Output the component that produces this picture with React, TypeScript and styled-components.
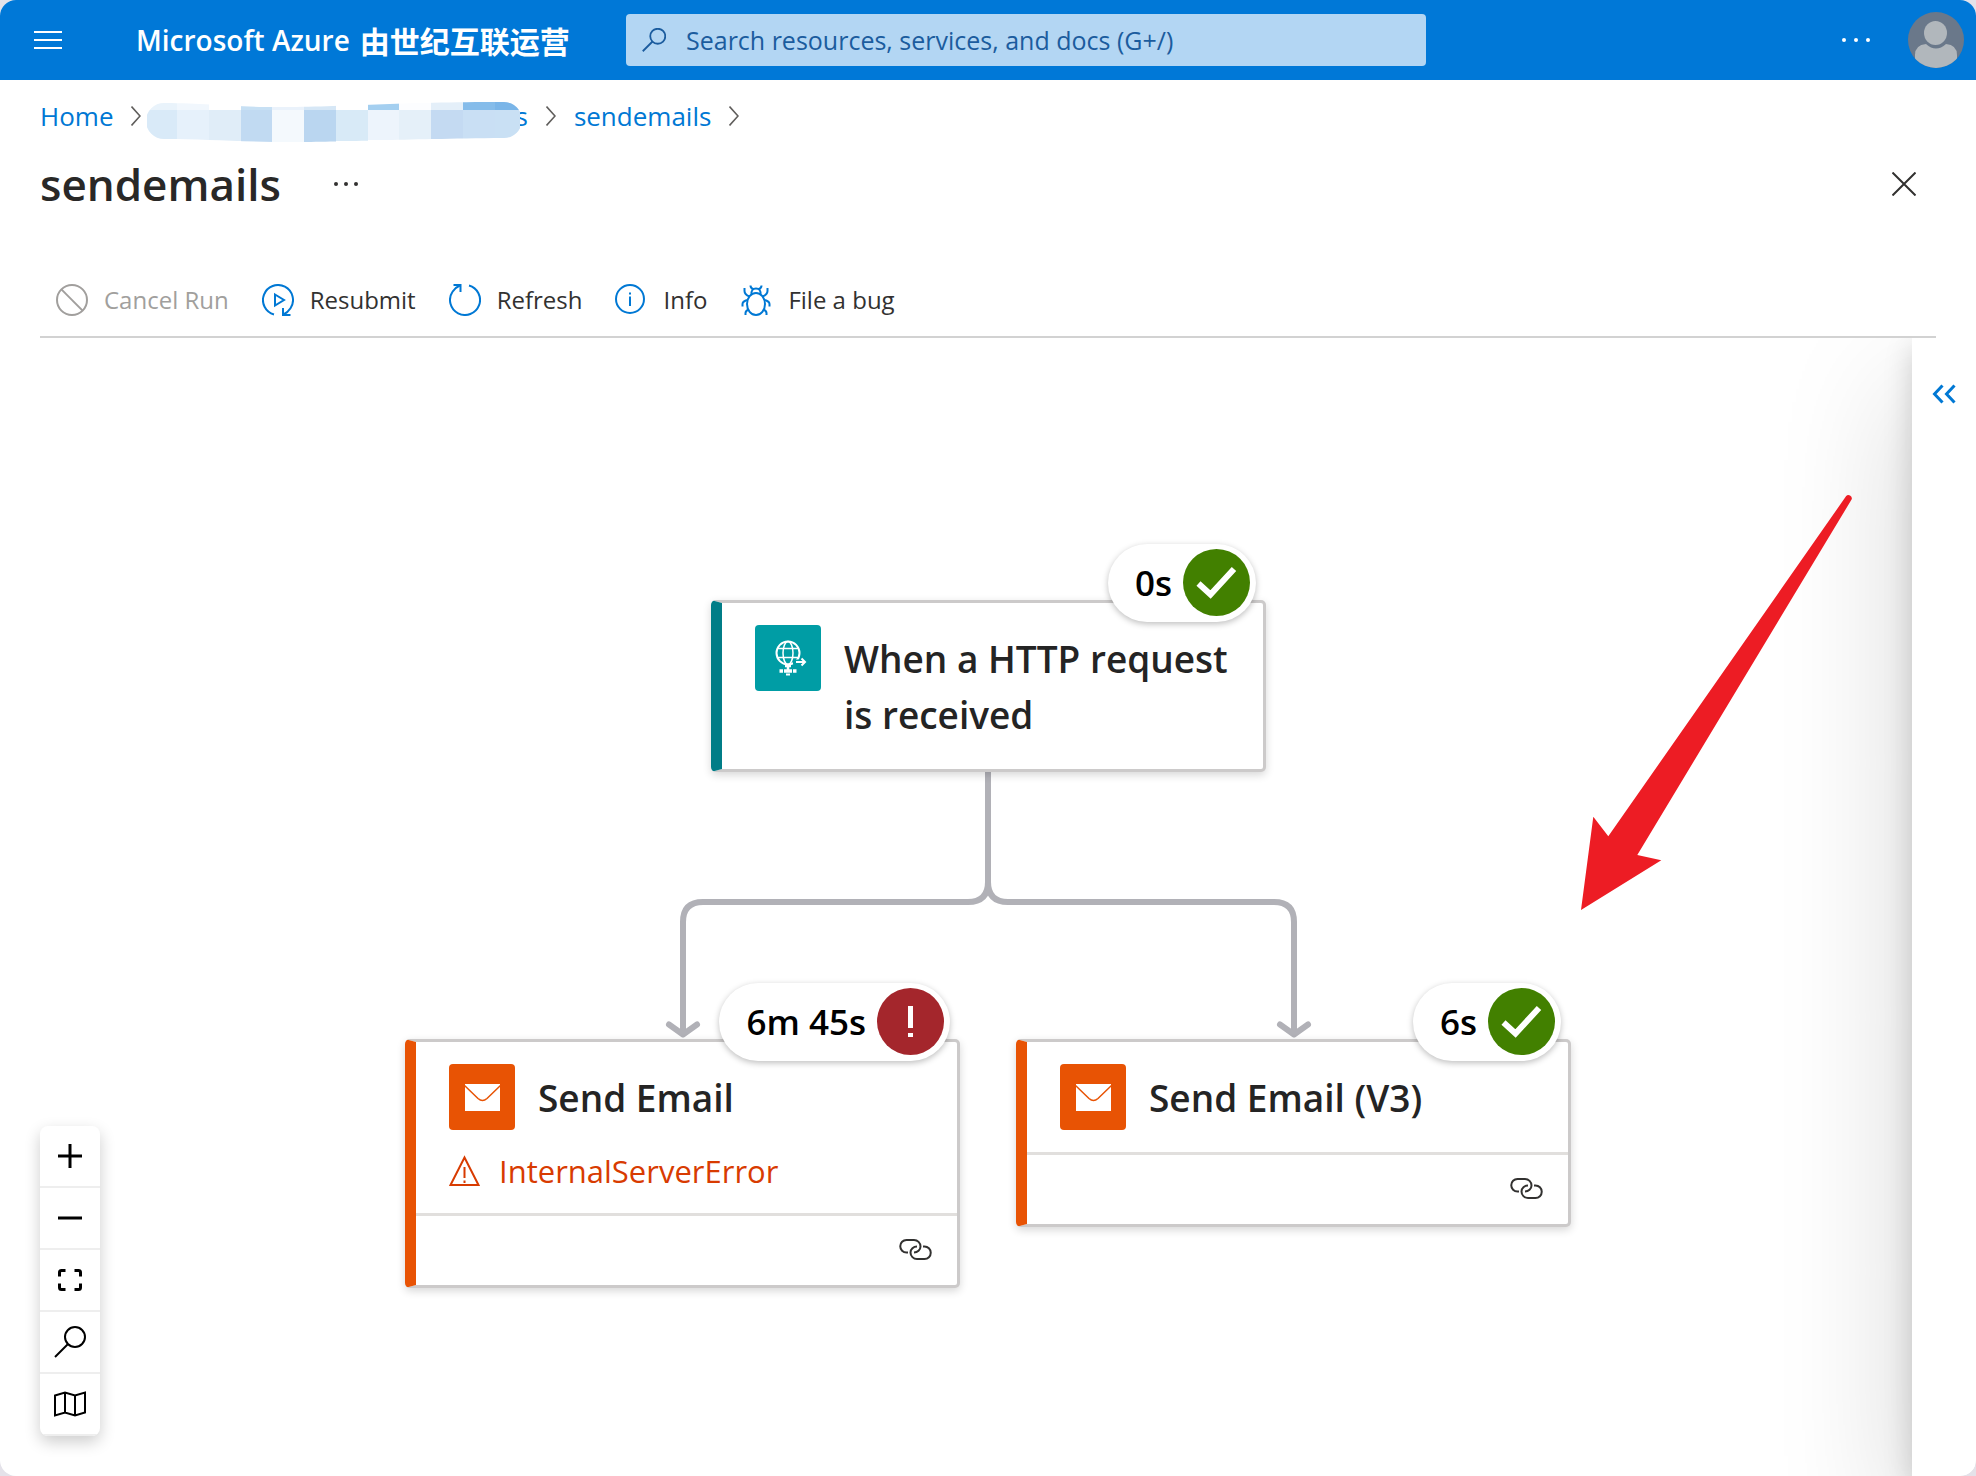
import React from "react";
import styled, { createGlobalStyle } from "styled-components";

const font = `"Open Sans", "Noto Sans", "Noto Sans CJK SC", sans-serif`;

const GlobalStyle = createGlobalStyle`
  *, *::before, *::after { box-sizing: border-box; }
  body { margin: 0; background: #e4e2e9; font-family: ${font}; color: #323130; }
  button { font: inherit; color: inherit; background: none; border: 0; padding: 0; cursor: pointer; }
  svg { display: block; flex: none; }
`;

const Page = styled.div`
  display: flex;
  flex-direction: column;
  min-height: 100vh;
  background: #fff;
  border-radius: 16px;
  overflow: hidden;
`;

const TopBar = styled.header`
  display: flex;
  align-items: center;
  height: 80px;
  padding: 0 12px 0 34px;
  background: #0078d7;
  color: #fff;
`;

const Brand = styled.div`
  display: flex;
  align-items: center;
  gap: 10px;
  width: 490px;
  margin-left: 74px;
  font-size: 28px;
  font-weight: 600;
  line-height: 40px;
  white-space: nowrap;
`;

const BrandRegion = styled.span`
  font-family: "Noto Sans CJK SC", sans-serif;
  font-size: 30px;
  font-weight: 700;
`;

const SearchBox = styled.label`
  display: flex;
  align-items: center;
  gap: 20px;
  flex: 0 1 800px;
  height: 52px;
  padding: 0 16px;
  border-radius: 4px;
  background: #b3d6f3;
  color: #1b5c9e;
`;

const SearchInput = styled.input`
  flex: 1;
  min-width: 0;
  border: 0;
  padding: 0;
  outline: 0;
  background: transparent;
  font: 400 25px/36px ${font};
  color: #1b5c9e;
  &::placeholder { color: #1b5c9e; opacity: 1; }
`;

const TopActions = styled.div`
  display: flex;
  align-items: center;
  gap: 37px;
  margin-left: auto;
`;

const Crumbs = styled.nav`
  display: flex;
  align-items: center;
  gap: 18px;
  height: 40px;
  margin: 16px 40px 0;
`;

const CrumbLink = styled.a`
  display: flex;
  align-items: center;
  font-size: 26px;
  line-height: 40px;
  color: #0078d4;
  text-decoration: none;
`;

const MaskedLink = styled(CrumbLink)`
  margin-left: -12px;
  svg { margin-right: -5px; position: relative; }
`;

const TitleRow = styled.div`
  display: flex;
  align-items: center;
  height: 64px;
  margin: 16px 60px 0 40px;
`;

const Title = styled.h1`
  margin: 0 52px 0 0;
  font-size: 44px;
  font-weight: 600;
  line-height: 64px;
  color: #292827;
`;

const CloseButton = styled.button`
  margin-left: auto;
`;

const Toolbar = styled.div`
  display: flex;
  align-items: center;
  gap: 33px;
  height: 74px;
  margin: 48px 40px 0;
  padding-left: 16px;
  border-bottom: 2px solid #d2d2d2;
`;

const Command = styled.button`
  display: flex;
  align-items: center;
  gap: 16px;
  font-size: 24px;
  line-height: 40px;
  color: #323130;
  white-space: nowrap;
  svg { color: #0078d4; }
  &:disabled { color: #a19f9d; cursor: default; }
  &:disabled svg { color: #a19f9d; }
`;

const Canvas = styled.main`
  position: relative;
  flex: 1;
  display: flex;
  justify-content: center;
  padding: 262px 0 150px;
  overflow: hidden;
`;

const Graph = styled.div`
  position: relative;
  z-index: 1;
  flex: none;
  width: 1166px;
  height: 688px;
`;

const Edges = styled.svg`
  position: absolute;
  left: 0;
  top: 171px;
`;

const Pointer = styled.svg`
  position: absolute;
  left: 1166px;
  top: -110px;
  z-index: 2;
`;

const Node = styled.article<{ $x: number; $y: number; $accent: string }>`
  position: absolute;
  left: ${(p) => p.$x}px;
  top: ${(p) => p.$y}px;
  width: 555px;
  background: #fff;
  border: 3px solid #cccaca;
  border-left: 11px solid ${(p) => p.$accent};
  border-radius: 5px;
  box-shadow: 0 3px 9px rgba(0, 0, 0, 0.16);
`;

const NodeBody = styled.div`
  padding: 22px 24px 22px 33px;
`;

const NodeHead = styled.div`
  display: flex;
  align-items: flex-start;
  gap: 23px;
`;

const NodeIcon = styled.div<{ $color: string }>`
  flex: none;
  border-radius: 4px;
  background: ${(p) => p.$color};
`;

const NodeTitle = styled.h2`
  margin: 0;
  padding: 6px 0 4px;
  font-size: 37px;
  font-weight: 600;
  line-height: 56px;
  color: #242424;
`;

const NodeError = styled.div`
  display: flex;
  align-items: center;
  gap: 19px;
  height: 40px;
  margin-top: 21px;
  font-size: 31px;
  line-height: 40px;
  color: #d83b01;
`;

const NodeFooter = styled.div`
  display: flex;
  align-items: center;
  justify-content: flex-end;
  height: 72px;
  padding: 0 25px 3px;
  border-top: 3px solid #e1dfdd;
`;

const Badge = styled.div`
  position: absolute;
  top: -59px;
  right: 7px;
  display: flex;
  align-items: center;
  gap: 11px;
  height: 78px;
  padding: 0 6px 0 27px;
  border-radius: 39px;
  background: #fff;
  box-shadow: 0 2px 6px rgba(0, 0, 0, 0.26);
  font-size: 35px;
  font-weight: 600;
  line-height: 48px;
  color: #000;
  white-space: nowrap;
  svg { margin-bottom: 2px; }
`;

const SidePanel = styled.aside`
  position: absolute;
  top: 0;
  right: 0;
  bottom: 0;
  width: 64px;
  display: flex;
  justify-content: center;
  align-items: flex-start;
  padding-top: 46px;
  background: #fff;
  box-shadow: 0 51px 128px rgba(0, 0, 0, 0.22), 0 10px 29px rgba(0, 0, 0, 0.18);
`;

const ZoomControls = styled.div`
  position: absolute;
  left: 40px;
  bottom: 40px;
  z-index: 2;
  width: 60px;
  border-radius: 8px;
  overflow: hidden;
  background: #fff;
  box-shadow: 0 6px 16px rgba(0, 0, 0, 0.2);
`;

const ZoomButton = styled.button`
  display: flex;
  align-items: center;
  justify-content: center;
  width: 60px;
  height: 62px;
  border-bottom: 2px solid #eee;
  color: #000;
`;

const Dots = ({ gap, r, color }: { gap: number; r: number; color: string }) => (
  <svg width={gap * 2 + r * 2 + 2} height="12" fill={color}>
    {[0, 1, 2].map((i) => (
      <circle key={i} cx={r + 1 + i * gap} cy="6" r={r} />
    ))}
  </svg>
);

const Magnifier = ({ size, width }: { size: number; width: number }) => (
  <svg width={size} height={size} viewBox="0 0 32 32" fill="none" stroke="currentColor" strokeWidth={width}>
    <circle cx="21" cy="11" r="10" />
    <path d="M14 18 1 31" />
  </svg>
);

const Chevron = () => (
  <svg width="10" height="20" fill="none" stroke="#605e5c" strokeWidth="1.6">
    <path d="M0.5 0.5 9 10 0.5 19.5" />
  </svg>
);

const maskCells = [
  { x: 0, w: 30, top: "#e9f3fb", main: "#d9eaf8", b: 37 },
  { x: 30, w: 32, top: "#f1f7fd", main: "#e6f1fb", b: 38 },
  { x: 62, w: 32, top: "#ffffff", main: "#e0edf8", b: 39 },
  { x: 94, w: 31, top: "#c7e0f4", main: "#c1daf2", b: 40 },
  { x: 125, w: 32, top: "#eaf2fb", main: "#f4f9fd", b: 40 },
  { x: 157, w: 32, top: "#d6e7f6", main: "#bad6f0", b: 40 },
  { x: 189, w: 32, top: "#ffffff", main: "#d8eaf7", b: 39 },
  { x: 221, w: 31, top: "#a4cff0", main: "#edf4fc", b: 38 },
  { x: 252, w: 32, top: "#fcfdff", main: "#e5f0f9", b: 38 },
  { x: 284, w: 32, top: "#e4eff9", main: "#c4daf2", b: 37 },
  { x: 316, w: 32, top: "#85bcea", main: "#c9dff4", b: 37 },
  { x: 348, w: 25, top: "#7ab5e8", main: "#c9e0f4", b: 36 },
];

const Mask = () => (
  <svg width="373" height="52" viewBox="0 -12 373 52" aria-hidden="true">
    <defs>
      <clipPath id="mask-shape">
        <path d="M17 1 C60 1 80 5 130 5 C200 5 250 0 357 0 A18 18 0 0 1 357 36 C250 37 200 40 150 40 C90 40 60 37 17 37 A18 18 0 0 1 17 1Z" />
      </clipPath>
    </defs>
    <g clipPath="url(#mask-shape)">
      {maskCells.map((c) => (
        <g key={c.x}>
          <rect x={c.x} y="0" width={c.w} height="8" fill={c.top} />
          <rect x={c.x} y="8" width={c.w} height={c.b - 8} fill={c.main} />
        </g>
      ))}
    </g>
  </svg>
);

const Icon = ({ children, w = 2 }: { children: React.ReactNode; w?: number }) => (
  <svg width="32" height="32" viewBox="0 0 32 32" fill="none" stroke="currentColor" strokeWidth={w}>
    {children}
  </svg>
);

const CancelIcon = () => (
  <Icon>
    <circle cx="16" cy="16" r="15" />
    <path d="M5.4 5.4 26.6 26.6" />
  </Icon>
);

const ResubmitIcon = () => (
  <Icon>
    <path d="M12 30.5A15 15 0 1 1 28.5 24.3Q26 28.3 21.5 30.5" />
    <path d="M21 24V31H28.5" />
    <path d="M13 10.5 22 16 13 21.5Z" />
  </Icon>
);

const RefreshIcon = () => (
  <Icon>
    <path d="M20 1.5A15 15 0 1 1 3.5 7.7Q6 3.7 10.8 1.5" />
    <path d="M4.5 1H11.5V8" />
  </Icon>
);

const InfoIcon = () => (
  <Icon>
    <circle cx="15" cy="15" r="14" />
    <path d="M15 12.5V22" />
    <path d="M15 8.5V10.5" />
  </Icon>
);

const BugIcon = () => (
  <Icon>
    <ellipse cx="16" cy="20" rx="9" ry="11" />
    <path d="M11.5 10.5Q11 4.5 16 4.5T20.5 10.5M10.5 1.5Q10.5 4 13 5M21.5 1.5Q21.5 4 19 5" />
    <path d="M4.5 4V7Q4.5 10.5 9.5 12.5M27.5 4V7Q27.5 10.5 22.5 12.5" />
    <path d="M2.5 22.5V20Q2.5 17.5 7 16M29.5 22.5V20Q29.5 17.5 25 16" />
    <path d="M5.5 31V29Q5.5 27 8.5 25.5M26.5 31V29Q26.5 27 23.5 25.5" />
  </Icon>
);

const LinkIcon = () => {
  const half = "M9 13.5H7.5A6.25 6.25 0 0 1 7.5 1H15A6.5 6.5 0 0 1 21.5 7.5C21.5 11 18.5 13.5 15 13.5";
  return (
    <svg width="33" height="21" viewBox="0 0 33 21" fill="none" stroke="#323130" strokeWidth="2">
      <path d={half} />
      <path d={half} transform="rotate(180 16.5 10.5)" />
    </svg>
  );
};

const GlobeIcon = () => (
  <svg width="66" height="66" viewBox="0 0 66 66" fill="none" stroke="#fff" strokeWidth="1.5">
    <circle cx="33" cy="28" r="11.5" strokeWidth="2" />
    <ellipse cx="33" cy="28" rx="5" ry="11.5" />
    <path d="M22.5 23.5H43.5M22.5 32.5H43.5" />
    <path d="M33 40V45M30 41H36" strokeWidth="2.5" />
    <path d="M24.5 46H28M29 46H37M38 46H41.5" strokeWidth="3.5" />
    <path d="M31 49.5H35" strokeWidth="2" />
    <path d="M38 37H50M46.5 33.5 50 37 46.5 40.5" stroke="#009da5" strokeWidth="5" />
    <path d="M41 37H50M46.5 33.5 50 37 46.5 40.5" strokeWidth="2" />
  </svg>
);

const MailIcon = () => (
  <svg width="66" height="66" viewBox="0 0 66 66">
    <rect x="16" y="20" width="35" height="27" fill="#fff" />
    <path d="M15 21 29 34.5Q33.5 38.5 38 34.5L52 21" fill="none" stroke="#e85304" strokeWidth="1.5" />
  </svg>
);

const SuccessIcon = () => (
  <svg width="67" height="67" viewBox="0 0 67 67">
    <circle cx="33.5" cy="33.5" r="33.5" fill="#428000" />
    <path d="M15.5 34.5 27.5 45.5 51 20" fill="none" stroke="#fff" strokeWidth="6" />
  </svg>
);

const FailedIcon = () => (
  <svg width="67" height="67" viewBox="0 0 67 67">
    <circle cx="33.5" cy="33.5" r="33.5" fill="#a4262c" />
    <path d="M33.5 18V40M33.5 45V49" stroke="#fff" strokeWidth="5" />
  </svg>
);

const WarningIcon = () => (
  <svg width="31" height="32" viewBox="0 0 31 32" fill="none" stroke="#d83b01" strokeWidth="2">
    <path d="M15.5 2.5 29.5 30H1.5Z" />
    <path d="M15.5 12V23M15.5 25.5V28" />
  </svg>
);

type NodeData = {
  title: string;
  x: number;
  y: number;
  accent: string;
  fill: string;
  icon: React.ReactNode;
  duration: string;
  failed?: boolean;
  error?: string;
  connection?: boolean;
};

const nodes: NodeData[] = [
  { title: "When a HTTP request is received", x: 306, y: 0, accent: "#007d87", fill: "#009da5", icon: <GlobeIcon />, duration: "0s" },
  { title: "Send Email", x: 0, y: 439, accent: "#e85304", fill: "#e85304", icon: <MailIcon />, duration: "6m 45s", failed: true, error: "InternalServerError", connection: true },
  { title: "Send Email (V3)", x: 611, y: 439, accent: "#e85304", fill: "#e85304", icon: <MailIcon />, duration: "6s", connection: true },
];

const RunNode = ({ node }: { node: NodeData }) => (
  <Node $x={node.x} $y={node.y} $accent={node.accent}>
    <NodeBody>
      <NodeHead>
        <NodeIcon $color={node.fill}>{node.icon}</NodeIcon>
        <NodeTitle>{node.title}</NodeTitle>
      </NodeHead>
      {node.error && (
        <NodeError>
          <WarningIcon />
          {node.error}
        </NodeError>
      )}
    </NodeBody>
    {node.connection && (
      <NodeFooter>
        <LinkIcon />
      </NodeFooter>
    )}
    <Badge>
      {node.duration}
      {node.failed ? <FailedIcon /> : <SuccessIcon />}
    </Badge>
  </Node>
);

export default function App() {
  return (
    <Page>
      <GlobalStyle />
      <TopBar>
        <button aria-label="Show portal menu">
          <svg width="28" height="20" fill="#fff">
            <rect y="1" width="28" height="2" />
            <rect y="9" width="28" height="2" />
            <rect y="17" width="28" height="2" />
          </svg>
        </button>
        <Brand>
          <span>Microsoft Azure</span>
          <BrandRegion lang="zh">由世纪互联运营</BrandRegion>
        </Brand>
        <SearchBox>
          <Magnifier size={24} width={2.4} />
          <SearchInput aria-label="Search" placeholder="Search resources, services, and docs (G+/)" />
        </SearchBox>
        <TopActions>
          <button aria-label="More">
            <Dots gap={12} r={2} color="#fff" />
          </button>
          <button aria-label="Account">
            <svg width="56" height="56" viewBox="0 0 56 56">
              <defs>
                <clipPath id="avatar-shape">
                  <circle cx="28" cy="28" r="28" />
                </clipPath>
              </defs>
              <g clipPath="url(#avatar-shape)">
                <rect width="56" height="56" fill="#6a788a" />
                <path d="M7 56V43Q7 33 18 32Q28 41 38 32Q49 33 49 43V56Z" fill="#b1b7bc" />
                <ellipse cx="27.5" cy="21" rx="11.5" ry="12" fill="#b1b7bc" />
              </g>
            </svg>
          </button>
        </TopActions>
      </TopBar>

      <Crumbs aria-label="Breadcrumb">
        <CrumbLink href="#">Home</CrumbLink>
        <Chevron />
        <MaskedLink href="#">
          <Mask />s
        </MaskedLink>
        <Chevron />
        <CrumbLink href="#">sendemails</CrumbLink>
        <Chevron />
      </Crumbs>

      <TitleRow>
        <Title>sendemails</Title>
        <button aria-label="More options">
          <Dots gap={10} r={2} color="#323130" />
        </button>
        <CloseButton aria-label="Close">
          <svg width="24" height="24" fill="none" stroke="#323130" strokeWidth="2">
            <path d="M0.5 0.5 23.5 23.5M23.5 0.5 0.5 23.5" />
          </svg>
        </CloseButton>
      </TitleRow>

      <Toolbar role="toolbar">
        <Command disabled>
          <CancelIcon />
          Cancel Run
        </Command>
        <Command>
          <ResubmitIcon />
          Resubmit
        </Command>
        <Command>
          <RefreshIcon />
          Refresh
        </Command>
        <Command>
          <InfoIcon />
          Info
        </Command>
        <Command>
          <BugIcon />
          File a bug
        </Command>
      </Toolbar>

      <Canvas>
        <Graph>
          <Edges width="1166" height="268" fill="none" stroke="#b1b1b7" strokeWidth="6">
            <path d="M583 0V111Q583 131 563 131H298Q278 131 278 151V262" />
            <path d="M583 0V111Q583 131 603 131H869Q889 131 889 151V262" />
            <path
              d="M264 253.5 278 263.5 292 253.5M875 253.5 889 263.5 903 253.5"
              strokeLinecap="round"
              strokeLinejoin="round"
            />
          </Edges>
          {nodes.map((n) => (
            <RunNode key={n.title} node={n} />
          ))}
          <Pointer width="290" height="424" viewBox="0 0 290 424">
            <path
              d="M10 420 22.3 326.7 37.3 346.3 275 6.3A3.3 3.3 0 0 1 280.7 9.3L66.3 365 90.3 370.3Z"
              fill="#ed1c24"
            />
          </Pointer>
        </Graph>

        <SidePanel>
          <button aria-label="Expand panel">
            <svg width="24" height="20" fill="none" stroke="#0078d4" strokeWidth="3">
              <path d="M10.5 1.5 2.5 10 10.5 18.5M22.5 1.5 14.5 10 22.5 18.5" />
            </svg>
          </button>
        </SidePanel>

        <ZoomControls>
          <ZoomButton aria-label="Zoom in">
            <svg width="24" height="24" stroke="currentColor" strokeWidth="3">
              <path d="M0 12H24M12 0V24" />
            </svg>
          </ZoomButton>
          <ZoomButton aria-label="Zoom out">
            <svg width="24" height="24" stroke="currentColor" strokeWidth="3">
              <path d="M0 12H24" />
            </svg>
          </ZoomButton>
          <ZoomButton aria-label="Fit view">
            <svg width="24" height="22" fill="none" stroke="currentColor" strokeWidth="3">
              <path d="M1.5 7.5V3.5Q1.5 1.5 3.5 1.5H7.5M16.5 1.5H20.5Q22.5 1.5 22.5 3.5V7.5M22.5 14.5V18.5Q22.5 20.5 20.5 20.5H16.5M7.5 20.5H3.5Q1.5 20.5 1.5 18.5V14.5" />
            </svg>
          </ZoomButton>
          <ZoomButton aria-label="Search">
            <Magnifier size={32} width={2} />
          </ZoomButton>
          <ZoomButton aria-label="Toggle minimap">
            <svg width="32" height="26" fill="none" stroke="currentColor" strokeWidth="2">
              <path d="M1 4.5 11 1.5 21 4.5 31 1.5V21.5L21 24.5 11 21.5 1 24.5ZM11 1.5V21.5M21 4.5V24.5" />
            </svg>
          </ZoomButton>
        </ZoomControls>
      </Canvas>
    </Page>
  );
}
